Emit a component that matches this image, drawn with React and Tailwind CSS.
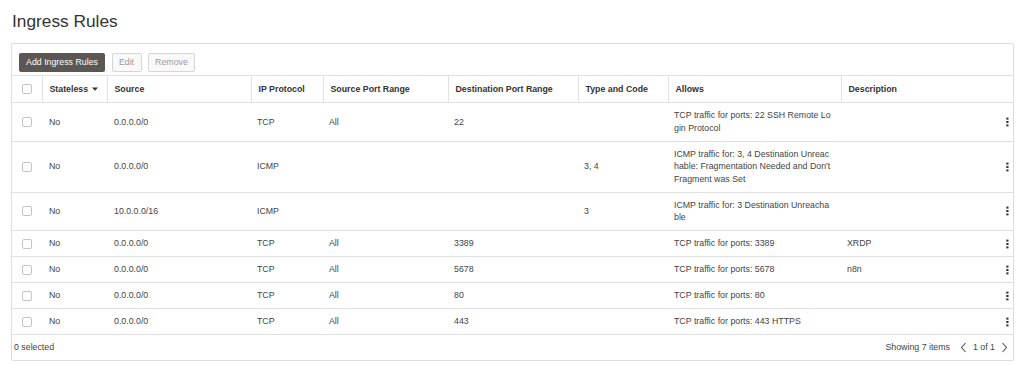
import React from 'react';

const RULES = [
  { stateless: 'No', source: '0.0.0.0/0', protocol: 'TCP', srcPort: 'All', dstPort: '22', typeCode: '', allows: 'TCP traffic for ports: 22 SSH Remote Login Protocol', desc: '' },
  { stateless: 'No', source: '0.0.0.0/0', protocol: 'ICMP', srcPort: '', dstPort: '', typeCode: '3, 4', allows: "ICMP traffic for: 3, 4 Destination Unreachable: Fragmentation Needed and Don't Fragment was Set", desc: '' },
  { stateless: 'No', source: '10.0.0.0/16', protocol: 'ICMP', srcPort: '', dstPort: '', typeCode: '3', allows: 'ICMP traffic for: 3 Destination Unreachable', desc: '' },
  { stateless: 'No', source: '0.0.0.0/0', protocol: 'TCP', srcPort: 'All', dstPort: '3389', typeCode: '', allows: 'TCP traffic for ports: 3389', desc: 'XRDP' },
  { stateless: 'No', source: '0.0.0.0/0', protocol: 'TCP', srcPort: 'All', dstPort: '5678', typeCode: '', allows: 'TCP traffic for ports: 5678', desc: 'n8n' },
  { stateless: 'No', source: '0.0.0.0/0', protocol: 'TCP', srcPort: 'All', dstPort: '80', typeCode: '', allows: 'TCP traffic for ports: 80', desc: '' },
  { stateless: 'No', source: '0.0.0.0/0', protocol: 'TCP', srcPort: 'All', dstPort: '443', typeCode: '', allows: 'TCP traffic for ports: 443 HTTPS', desc: '' },
];

const Checkbox = () => (
  <span className="block w-[10px] h-[10px] border border-[#c4c4c4] rounded-[2px] bg-white mx-auto" />
);

const Kebab = () => (
  <svg width="3" height="10" viewBox="0 0 3 10" className="shrink-0">
    <rect x="0.3" y="0.6" width="2.2" height="2" fill="#333" />
    <rect x="0.3" y="4" width="2.2" height="2" fill="#333" />
    <rect x="0.3" y="7.4" width="2.2" height="2" fill="#333" />
  </svg>
);

const Chevron = ({ dir }) => (
  <svg width="7" height="11" viewBox="0 0 7 11">
    <polyline
      points={dir === 'left' ? '5.5,1 1.5,5.5 5.5,10' : '1.5,1 5.5,5.5 1.5,10'}
      fill="none"
      stroke="#555"
      strokeWidth="1.1"
    />
  </svg>
);

const th = 'px-[7px] text-left font-bold text-[#333] border-x border-[#e2e2e2] first:border-l-0 last:border-r-0';
const td = 'px-[6px] py-[6.25px] align-middle';

export default function App() {
  return (
    <div className="w-[1024px] h-[365px] bg-white text-[#333] font-['Liberation_Sans',Arial,sans-serif] overflow-hidden">
      <h1 className="pl-[12px] pt-[10px] h-[43px] text-[17.3px] leading-[22px] text-[#333]">Ingress Rules</h1>

      <div className="ml-[11px] w-[1003px] border border-[#dcdcdc] rounded-[2px] text-[8.8px] leading-[12.5px] text-[#444]">
        {/* toolbar */}
        <div className="flex items-center gap-[6.5px] pl-[7px] pt-[6px] h-[31px]">
          <button className="h-[19px] w-[86px] bg-[#5c5752] text-white rounded-[2px] text-[8.8px]">Add Ingress Rules</button>
          <button className="h-[19px] w-[30px] border border-[#d6d6d6] bg-[#f9f9f9] text-[#9a9a9a] rounded-[2px] text-[8.8px]">Edit</button>
          <button className="h-[19px] w-[47px] border border-[#d6d6d6] bg-[#f9f9f9] text-[#9a9a9a] rounded-[2px] text-[8.8px]">Remove</button>
        </div>

        <table className="w-full table-fixed border-collapse">
          <colgroup>
            <col className="w-[30px]" />
            <col className="w-[65px]" />
            <col className="w-[144px]" />
            <col className="w-[72px]" />
            <col className="w-[125px]" />
            <col className="w-[130px]" />
            <col className="w-[90px]" />
            <col className="w-[173px]" />
            <col />
          </colgroup>
          <thead>
            <tr className="h-[27px] border-y border-[#e0e0e0]">
              <th className={th}><Checkbox /></th>
              <th className={th}>
                <span className="inline-flex items-center gap-[4px]">
                  Stateless
                  <svg width="6" height="4" viewBox="0 0 6 4"><polygon points="0,0.5 6,0.5 3,3.8" fill="#333" /></svg>
                </span>
              </th>
              <th className={th}>Source</th>
              <th className={th}>IP Protocol</th>
              <th className={th}>Source Port Range</th>
              <th className={th}>Destination Port Range</th>
              <th className={th}>Type and Code</th>
              <th className={th}>Allows</th>
              <th className={th}>Description</th>
            </tr>
          </thead>
          <tbody>
            {RULES.map((r, i) => (
              <tr key={i} className="border-b border-[#e0e0e0]">
                <td className={td}><Checkbox /></td>
                <td className={`${td} pl-[7px]`}>{r.stateless}</td>
                <td className={`${td} pl-[7px]`}>{r.source}</td>
                <td className={`${td} pl-[6px]`}>{r.protocol}</td>
                <td className={`${td} pl-[6px]`}>{r.srcPort}</td>
                <td className={`${td} pl-[6px]`}>{r.dstPort}</td>
                <td className={`${td} pl-[6px]`}>{r.typeCode}</td>
                <td className={`${td} pr-[8px] break-all`}>{r.allows}</td>
                <td className={`${td} pr-[4px]`}>
                  <div className="flex items-center">
                    <span className="flex-1">{r.desc}</span>
                    <Kebab />
                  </div>
                </td>
              </tr>
            ))}
          </tbody>
        </table>

        {/* footer */}
        <div className="h-[25px] flex items-center justify-between pl-[2px] pr-[5px]">
          <span>0 selected</span>
          <div className="flex items-center">
            <span className="mr-[10px]">Showing 7 items</span>
            <Chevron dir="left" />
            <span className="mx-[6px]">1 of 1</span>
            <Chevron dir="right" />
          </div>
        </div>
      </div>
    </div>
  );
}
